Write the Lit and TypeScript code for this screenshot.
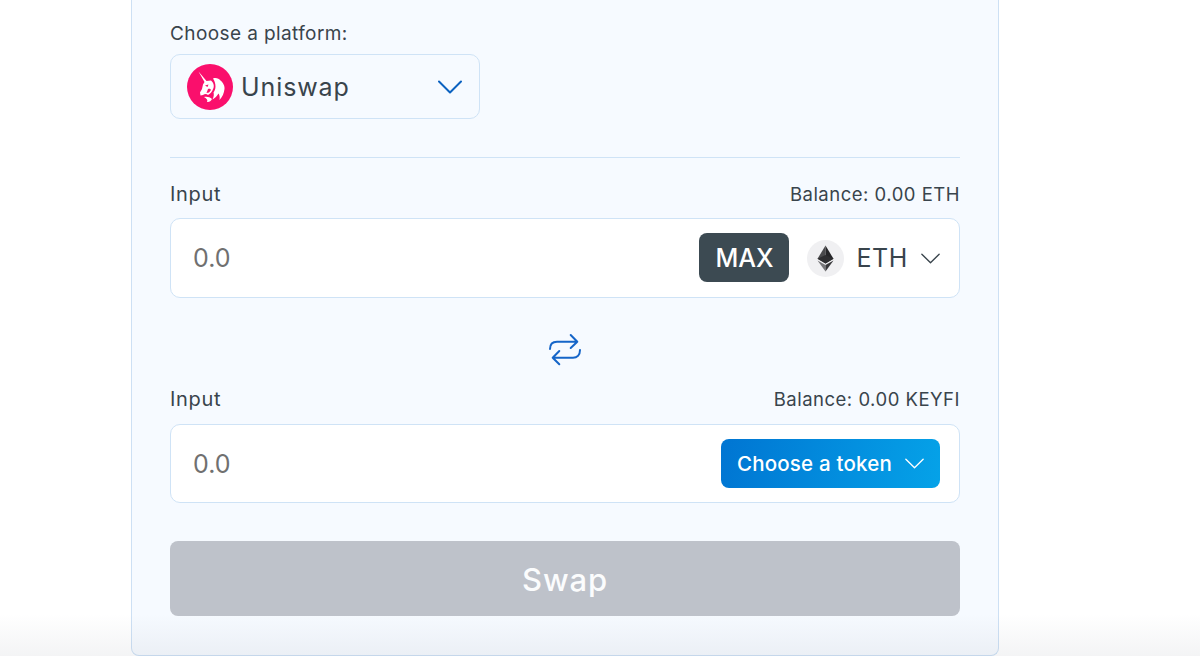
import { LitElement, css, html } from "lit";
import { customElement } from "lit/decorators.js";

const chevron = (cls: string) => html`<svg class=${cls} viewBox="0 0 24 14" fill="none" stroke="currentColor" stroke-linecap="round" stroke-linejoin="round">
  <path d="M1 1.5 L12 12.5 L23 1.5" />
</svg>`;

const unicorn = html`<svg class="logo" viewBox="0 0 46 46">
  <circle cx="23" cy="23" r="23" fill="#fa0f6c" />
  <path fill="#fff" d="M11.5 7.5 L19.5 17 L24 16.5 C26 18 27.5 21 26.5 24 C25 28 23 30 21 31 C19.5 29.5 17.5 30 16 31 L13.5 31.5 L13 28.5 L15 25 L16 20.5 L17.5 18 Z" />
  <path fill="#fff" d="M26 14.5 C29 13.5 32 14.5 33.5 16.5 C36 18.5 38 22 37.5 25 C37 29 35.5 33 32.5 36 C33 33 32.5 31 31.5 29.5 C30 32 28 34 25.5 35.5 C27 32.5 27 30 26.5 28.5 C29 25.5 29.5 20 26 14.5 Z" />
  <path fill="#fff" d="M17 33 C20 32.5 23 33 25 35 C24 37 22 38.5 20 38 C21 36.5 20 34.5 17 33 Z" />
  <path fill="#fa0f6c" d="M18 21.5 L21.5 20.5 L20.5 23 Z M21 25 C22.5 24.5 23.5 25 24 26 L22 28.5 L19.5 29 Z" />
</svg>`;

const ethIcon = html`<svg class="eth-logo" viewBox="0 0 37 37">
  <circle cx="18.5" cy="18.5" r="18.5" fill="#f0f0f2" />
  <path fill="#4a4a4c" d="M18.5 5.5 L10.5 18.8 L18.5 23.4 Z" />
  <path fill="#262628" d="M18.5 5.5 L26.5 18.8 L18.5 23.4 Z" />
  <path fill="#2e2e30" d="M18.5 15 L10.5 18.8 L18.5 23.4 L26.5 18.8 Z" />
  <path fill="#77777a" d="M10.5 20.4 L18.5 31.5 L18.5 25.1 Z" />
  <path fill="#38383a" d="M26.5 20.4 L18.5 31.5 L18.5 25.1 Z" />
</svg>`;

@customElement("app-root")
export class AppRoot extends LitElement {
  static styles = css`
    :host {
      display: block;
      position: relative;
      height: 656px;
      overflow: hidden;
      background: #fff;
      font-family: "Inter", "Liberation Sans", sans-serif;
      color: #39444c;
    }

    .panel {
      box-sizing: border-box;
      width: 868px;
      height: 656px;
      margin-left: 131px;
      padding: 22px 38px 0;
      background: #f6faff;
      border: 1px solid #cde0f4;
      border-top: none;
      border-radius: 0 0 8px 8px;
    }

    .label {
      font-size: 19px;
      line-height: 24px;
      letter-spacing: 0.4px;
    }

    .input-label {
      font-size: 20px;
      line-height: 24px;
      letter-spacing: 0.7px;
    }

    .select {
      box-sizing: border-box;
      display: flex;
      align-items: center;
      width: 310px;
      height: 65px;
      margin-top: 8px;
      padding: 0 17px 0 16px;
      border: 1px solid #cfe3f6;
      border-radius: 10px;
    }

    .logo {
      width: 46px;
      height: 46px;
      flex: none;
    }

    .select-name {
      flex: 1;
      margin-left: 8px;
      font-size: 25px;
      letter-spacing: 0.9px;
    }

    .chev-blue {
      width: 24px;
      height: 14px;
      color: #0b62c0;
      stroke-width: 2;
    }

    .divider {
      height: 1px;
      margin-top: 38px;
      background: #cfe3f6;
    }

    .row-head {
      display: flex;
      justify-content: space-between;
      align-items: center;
      height: 24px;
    }

    .first {
      margin-top: 24px;
    }

    .balance {
      font-size: 18.5px;
      line-height: 24px;
      letter-spacing: 0.5px;
    }

    .field {
      box-sizing: border-box;
      display: flex;
      align-items: center;
      height: 80px;
      margin-top: 12px;
      padding: 0 19px 0 22px;
      background: #fff;
      border: 1px solid #cfe3f6;
      border-radius: 10px;
    }

    .field.second {
      height: 79px;
      margin-top: 13px;
    }

    .amount {
      flex: 1;
      font-size: 25px;
      color: #707070;
    }

    .max {
      display: flex;
      align-items: center;
      justify-content: center;
      width: 90px;
      height: 49px;
      margin-bottom: 1px;
      background: #3c4a52;
      border-radius: 8px;
      color: #fff;
      font-size: 25px;
      font-weight: 500;
    }

    .eth-logo {
      width: 37px;
      height: 37px;
      margin-left: 18px;
    }

    .token {
      margin-left: 12px;
      font-size: 25px;
      letter-spacing: 0.6px;
    }

    .chev-small {
      width: 19px;
      height: 11px;
      margin-left: 13px;
      stroke-width: 1.7;
      color: #39444c;
    }

    .swap-icon {
      display: flex;
      justify-content: center;
      margin: 35px 0 21px;
    }

    .swap-icon svg {
      width: 34px;
      height: 33px;
    }

    .choose {
      display: flex;
      align-items: center;
      justify-content: center;
      gap: 13px;
      width: 219px;
      height: 49px;
      background: linear-gradient(100deg, #0075d2, #05a2e8);
      border-radius: 8px;
      color: #fff;
      font-size: 20.5px;
      font-weight: 500;
      letter-spacing: 0.2px;
    }

    .choose .chev-small {
      margin: 0;
      color: #fff;
    }

    .swap-btn {
      box-sizing: border-box;
      display: flex;
      align-items: center;
      justify-content: center;
      height: 75px;
      margin-top: 38px;
      padding-top: 1px;
      background: #bec2ca;
      border-radius: 8px;
      color: #fbfcfd;
      font-size: 31px;
      font-weight: 500;
      letter-spacing: 0.9px;
    }

    .fade {
      position: absolute;
      left: 0;
      right: 0;
      bottom: 0;
      height: 42px;
      background: linear-gradient(rgba(60, 70, 90, 0), rgba(60, 70, 90, 0.06));
      pointer-events: none;
    }
  `;

  render() {
    return html`<div class="panel">
        <div class="label">Choose a platform:</div>
        <div class="select">
          ${unicorn}
          <span class="select-name">Uniswap</span>
          ${chevron("chev-blue")}
        </div>
        <div class="divider"></div>

        <div class="row-head first">
          <span class="input-label">Input</span>
          <span class="balance">Balance: 0.00 ETH</span>
        </div>
        <div class="field">
          <span class="amount">0.0</span>
          <span class="max">MAX</span>
          ${ethIcon}
          <span class="token">ETH</span>
          ${chevron("chev-small")}
        </div>

        <div class="swap-icon">
          <svg viewBox="0 0 34 33" fill="none" stroke="#1565c8" stroke-width="2" stroke-linecap="round" stroke-linejoin="round">
            <path d="M22.7 2 L29.3 8.7 L22.7 15 M2 16 C2 11 5 8.7 9 8.7 H29.3" />
            <path d="M11.3 18 L4.7 24.7 L11.3 31.3 M32 17 C32 22 29 24.7 25 24.7 H4.7" />
          </svg>
        </div>

        <div class="row-head">
          <span class="input-label">Input</span>
          <span class="balance">Balance: 0.00 KEYFI</span>
        </div>
        <div class="field second">
          <span class="amount">0.0</span>
          <span class="choose">Choose a token ${chevron("chev-small")}</span>
        </div>

        <div class="swap-btn">Swap</div>
      </div>
      <div class="fade"></div>`;
  }
}
